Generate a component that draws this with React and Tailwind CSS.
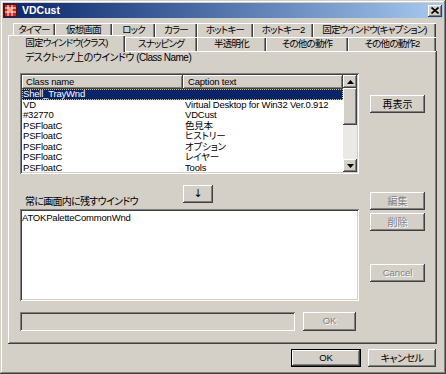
const FONT = "font-['Liberation_Sans','Noto_Sans_CJK_JP',sans-serif] [font-feature-settings:'palt']";
const FRAME = "shadow-[inset_-1px_-1px_#404040,inset_1px_1px_#d4d0c8,inset_-2px_-2px_#808080,inset_2px_2px_#fff]";
const RAISED = "shadow-[inset_-1px_-1px_#404040,inset_1px_1px_#fff,inset_-2px_-2px_#808080]";
const SUNKEN = "shadow-[inset_1px_1px_#808080,inset_-1px_-1px_#fff,inset_2px_2px_#404040,inset_-2px_-2px_#d4d0c8]";
const TAB = "shadow-[inset_1px_1px_#fff,inset_-1px_0_#404040,inset_-2px_0_#808080]";

const ROW1 = [
  ["タイマー", "w-[42px]"],
  ["仮想画面", "w-[57px]"],
  ["ロック", "w-[43px]"],
  ["カラー", "w-[42px]"],
  ["ホットキー", "w-[56px]"],
  ["ホットキー2", "w-[60px]"],
  ["固定ウインドウ(キャプション)", "w-[123px]"],
];

const ROW2 = [
  ["固定ウインドウ(クラス)", "w-[117px]", true],
  ["スナッピング", "w-[72px]"],
  ["半透明化", "w-[69px]"],
  ["その他の動作", "w-[82px]"],
  ["その他の動作2", "w-[88px]"],
];

const ROWS = [
  ["Shell_TrayWnd", ""],
  ["VD", "Virtual Desktop for Win32 Ver.0.912"],
  ["#32770", "VDCust"],
  ["PSFloatC", "色見本"],
  ["PSFloatC", "ヒストリー"],
  ["PSFloatC", "オプション"],
  ["PSFloatC", "レイヤー"],
  ["PSFloatC", "Tools"],
];

function Button({ children, className = "", disabled, isDefault }) {
  const label = disabled ? "text-[#808080] [text-shadow:1px_1px_0_#fff]" : "text-black";
  if (isDefault) {
    return (
      <div className={`border border-black ${className}`}>
        <div className={`h-full w-full flex items-center justify-center ${RAISED} ${label}`}>{children}</div>
      </div>
    );
  }
  return (
    <div className={`flex items-center justify-center ${RAISED} ${label} ${className}`}>{children}</div>
  );
}

function Arrow({ down }) {
  return (
    <svg width="7" height="4" viewBox="0 0 7 4">
      <path d={down ? "M0 0 L7 0 L3.5 4Z" : "M3.5 0 L7 4 L0 4Z"} fill="#000" />
    </svg>
  );
}

function TitleBar() {
  return (
    <div className="h-[15px] shrink-0 flex items-center bg-linear-to-r from-[#0a246a] to-[#a6caf0]">
      <svg width="13" height="13" viewBox="0 0 13 13" className="ml-[1px]">
        <rect x="0" y="0" width="13" height="13" fill="#5a1010" />
        <rect x="1" y="1" width="11" height="11" fill="#d82020" />
        <path d="M4 1V12M8 1V12M1 4H12M1 8H12" stroke="#fff" strokeWidth="1" />
        <rect x="5" y="5" width="2" height="2" fill="#f0c040" />
      </svg>
      <span className="ml-[5px] text-white font-bold text-[10.5px] leading-none font-['Liberation_Sans',sans-serif]">VDCust</span>
      <div className={`ml-auto mr-[1px] w-[14px] h-[12px] bg-[#d4d0c8] flex items-center justify-center ${RAISED}`}>
        <svg width="8" height="7" viewBox="0 0 8 7">
          <path d="M0.5 0.5L7.5 6.5M7.5 0.5L0.5 6.5" stroke="#000" strokeWidth="1.6" />
        </svg>
      </div>
    </div>
  );
}

function Tabs() {
  return (
    <div className="mt-[5px] shrink-0 text-[9.5px] tracking-[-0.8px]">
      <div className="flex ml-[10px] h-[14px]">
        {ROW1.map(([t, w]) => (
          <div key={t} className={`${w} h-full flex items-center justify-center leading-none whitespace-nowrap ${TAB}`}>{t}</div>
        ))}
      </div>
      <div className="flex ml-[5px] h-[14px]">
        {ROW2.map(([t, w, sel]) =>
          sel ? (
            <div key={t} className={`${w} h-[17px] -mt-[2px] relative z-10 bg-[#d4d0c8] flex items-center justify-center leading-none whitespace-nowrap pb-[1px] ${TAB}`}>{t}</div>
          ) : (
            <div key={t} className={`${w} h-full flex items-center justify-center leading-none whitespace-nowrap ${TAB}`}>{t}</div>
          )
        )}
      </div>
    </div>
  );
}

function ClassList() {
  return (
    <div className={`h-[101px] bg-white p-[2px] flex ${SUNKEN}`}>
      <div className="w-[321px] flex flex-col text-[9.5px] tracking-[-0.2px]">
        <div className="flex h-[14px] shrink-0 bg-[#d4d0c8]">
          <div className={`w-[161px] pl-[4px] flex items-center ${RAISED}`}>Class name</div>
          <div className={`w-[160px] pl-[5px] flex items-center ${RAISED}`}>Caption text</div>
        </div>
        {ROWS.map(([c, t], i) => (
          <div
            key={i}
            className={`flex h-[10.5px] leading-[10.5px] whitespace-nowrap ${i === 0 ? "bg-[#0a246a] text-white outline-1 outline-dotted outline-[#c8c0a0] -outline-offset-1" : ""}`}
          >
            <div className="w-[161px] pl-[1px]">{c}</div>
            <div className="w-[160px] pl-[2px]">{t}</div>
          </div>
        ))}
      </div>
      <div className="w-[14px] flex flex-col bg-[#ebe9e5]">
        <div className={`h-[13px] bg-[#d4d0c8] flex items-center justify-center ${RAISED}`}>
          <Arrow />
        </div>
        <div className={`h-[37px] bg-[#d4d0c8] ${RAISED}`} />
        <div className="flex-1" />
        <div className={`h-[13px] bg-[#d4d0c8] flex items-center justify-center ${RAISED}`}>
          <Arrow down />
        </div>
      </div>
    </div>
  );
}

function Panel() {
  return (
    <div className={`ml-[5px] w-[429px] h-[293px] shrink-0 flex flex-col pl-[12px] pt-[1px] ${RAISED}`}>
      <div className="ml-[5px] h-[12px] leading-[12px] whitespace-nowrap tracking-[-0.5px]">デスクトップ上のウインドウ (Class Name)</div>
      <div className="flex mt-[9px] gap-[11px]">
        <div className="w-[339px] flex flex-col">
          <ClassList />
          <div className="flex items-start h-[24px] mt-[11px]">
            <div className="w-[163px] pl-[5px] pt-[11px] leading-[12px] whitespace-nowrap tracking-[-0.7px]">常に画面内に残すウインドウ</div>
            <Button className="w-[30px] h-[18px] text-[11px] font-['DejaVu_Sans',sans-serif]">↓</Button>
          </div>
          <div className={`h-[92px] bg-white px-[2px] pt-[3px] text-[9.5px] tracking-[-0.2px] leading-[11px] ${SUNKEN}`}>ATOKPaletteCommonWnd</div>
          <div className="flex mt-[11px] gap-[8px]">
            <div className={`w-[275px] h-[19px] bg-[#d4d0c8] ${SUNKEN}`} />
            <Button disabled className="w-[53px] h-[19px] text-[9.5px]">OK</Button>
          </div>
        </div>
        <div className="w-[55px] flex flex-col">
          <Button className="mt-[22px] h-[18px]">再表示</Button>
          <Button disabled className="mt-[79px] h-[18px]">編集</Button>
          <Button disabled className="mt-[3px] h-[18px]">削除</Button>
          <Button disabled className="mt-[33px] h-[18px] text-[9.5px]">Cancel</Button>
        </div>
      </div>
    </div>
  );
}

export default function App() {
  return (
    <div className={`w-[446px] h-[374px] overflow-hidden bg-[#d4d0c8] p-[3px] flex flex-col text-[10px] text-black ${FONT} ${FRAME}`}>
      <TitleBar />
      <Tabs />
      <Panel />
      <div className="flex justify-end gap-[7px] pr-[7px] mt-[5px]">
        <Button isDefault className="w-[70px] h-[18px] text-[9.5px]">OK</Button>
        <Button className="w-[68px] h-[18px] tracking-[-0.5px]">キャンセル</Button>
      </div>
    </div>
  );
}
